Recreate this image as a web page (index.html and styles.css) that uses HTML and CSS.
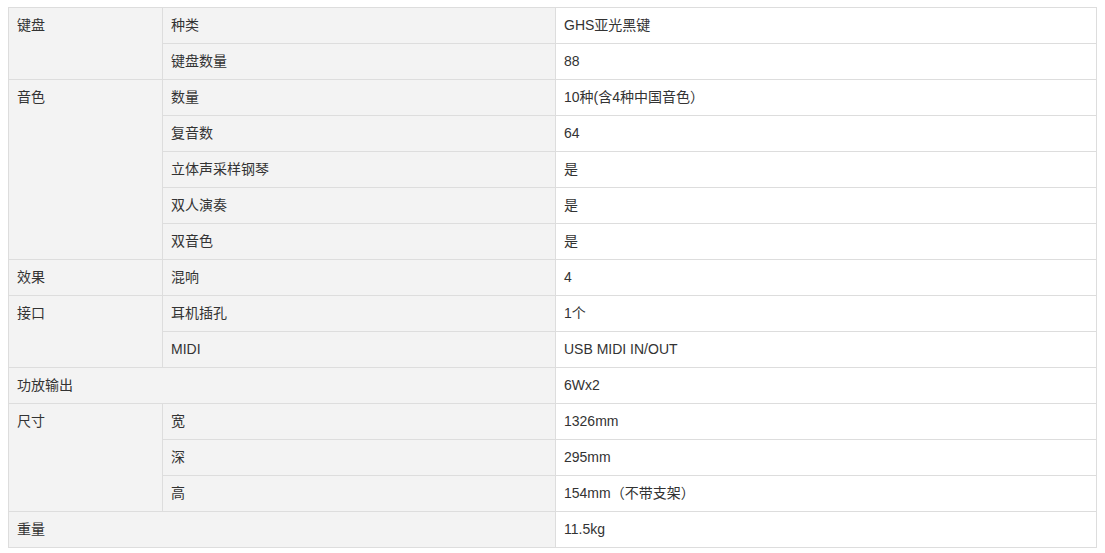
FILE: index.html
```html
<!DOCTYPE html>
<html lang="zh">
<head>
<meta charset="utf-8">
<link rel="stylesheet" href="styles.css">
</head>
<body>
<table class="spec">
  <colgroup><col class="c1"><col class="c2"><col class="c3"></colgroup>
  <tbody>
    <tr><td class="g" rowspan="2">键盘</td><td class="g">种类</td><td>GHS亚光黑键</td></tr>
    <tr><td class="g">键盘数量</td><td>88</td></tr>
    <tr><td class="g" rowspan="5">音色</td><td class="g">数量</td><td>10种(含4种中国音色）</td></tr>
    <tr><td class="g">复音数</td><td>64</td></tr>
    <tr><td class="g">立体声采样钢琴</td><td>是</td></tr>
    <tr><td class="g">双人演奏</td><td>是</td></tr>
    <tr><td class="g">双音色</td><td>是</td></tr>
    <tr><td class="g">效果</td><td class="g">混响</td><td>4</td></tr>
    <tr><td class="g" rowspan="2">接口</td><td class="g">耳机插孔</td><td>1个</td></tr>
    <tr><td class="g">MIDI</td><td>USB MIDI IN/OUT</td></tr>
    <tr><td class="g" colspan="2">功放输出</td><td>6Wx2</td></tr>
    <tr><td class="g" rowspan="3">尺寸</td><td class="g">宽</td><td>1326mm</td></tr>
    <tr><td class="g">深</td><td>295mm</td></tr>
    <tr><td class="g">高</td><td>154mm（不带支架）</td></tr>
    <tr><td class="g" colspan="2">重量</td><td>11.5kg</td></tr>
  </tbody>
</table>
</body>
</html>
```
FILE: styles.css
```css
html, body { background: #fff; }
body {
  margin: 7px 8px;
  font-family: "Liberation Sans", Arial, "Noto Sans CJK SC", sans-serif;
  font-size: 14px;
  color: #333;
}
.spec {
  width: 1089px;
  border-collapse: collapse;
  table-layout: fixed;
}
.c1 { width: 154px; }
.c2 { width: 393px; }
.spec td {
  border: 1px solid #ddd;
  padding: 8px 8px;
  height: 19px;
  line-height: 19px;
  vertical-align: top;
  text-align: left;
}
.spec td.g { background: #f3f3f3; }
```
